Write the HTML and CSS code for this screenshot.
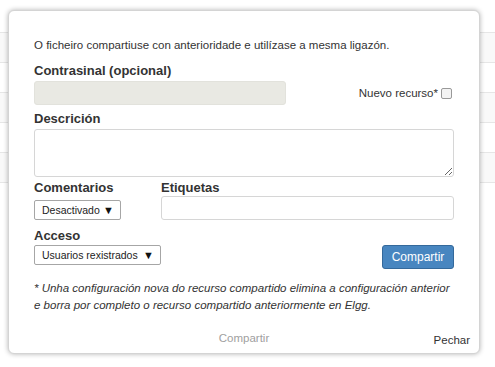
FILE: index.html
```html
<!DOCTYPE html>
<html lang="gl">
<head>
  <meta charset="UTF-8" />
  <meta name="viewport" content="width=device-width, initial-scale=1.0"/>
  <title>Compartir</title>
  <link rel="stylesheet" href="styles.css">
</head>
<body>

<div class="rows">
  <div class="row"></div>
  <div class="row"></div>
  <div class="row"></div>
  <div class="row"></div>
  <div class="row"></div>
</div>

<div class="modal">
  <p class="intro">O ficheiro compartiuse con anterioridade e utilízase a mesma ligazón.</p>

  <label class="lbl">Contrasinal (opcional)</label>
  <div class="line">
    <input type="text" class="pass" disabled />
    <span class="newres">Nuevo recurso* <span class="check"></span></span>
  </div>

  <label class="lbl desc-lbl">Descrición</label>
  <textarea class="desc"></textarea>

  <div class="cols">
    <div class="col-a">
      <label class="lbl">Comentarios</label>
      <div class="select sel-com">Desactivado <span class="arr">&#9660;</span></div>
    </div>
    <div class="col-b">
      <label class="lbl">Etiquetas</label>
      <input type="text" class="tags" />
    </div>
  </div>

  <label class="lbl acc-lbl">Acceso</label>
  <div class="line">
    <div class="select sel-acc">Usuarios rexistrados <span class="arr">&#9660;</span></div>
    <button class="btn">Compartir</button>
  </div>

  <p class="note">* Unha configuración nova do recurso compartido elimina a configuración anterior e borra por completo o recurso compartido anteriormente en Elgg.</p>

  <div class="foot">
    <span></span>
    <span class="foot-share">Compartir</span>
    <span class="foot-close">Pechar</span>
  </div>
</div>

</body>
</html>
```

FILE: styles.css
```css
body { margin: 0; font-family: "Liberation Sans", Arial, sans-serif; color: #333; background: #fff; }

.rows { margin-top: 32px; border-top: 1px solid #e6e6e6; }
.row { height: 29px; border-bottom: 1px solid #e6e6e6; }
.row:nth-child(odd) { background: #f9f9f9; }

.modal { position: absolute; left: 8px; top: 10px; width: 472px; height: 344px; box-sizing: border-box; padding: 26px 25px 0; background: #fff; border: 1px solid #d4d4d4; border-radius: 6px; box-shadow: 0 0 5px rgba(0,0,0,0.3); }

.intro { margin: 0 0 9px; font-size: 11.5px; line-height: 17px; }

.lbl { display: block; font-size: 13px; font-weight: bold; line-height: 16px; margin-bottom: 2px; }
.desc-lbl { margin-top: 6px; }
.acc-lbl { margin-top: 8px; margin-bottom: 1px; }

.line { display: flex; align-items: flex-start; }

.pass { width: 252px; height: 24px; box-sizing: border-box; margin: 0; background: #e9e9e3; border: 1px solid #e2e2dc; border-radius: 3px; }
.newres { margin-left: auto; margin-right: 2px; margin-top: 4px; font-size: 11.5px; line-height: 16px; display: flex; align-items: center; gap: 3px; }
.check { display: inline-block; width: 9px; height: 9px; border: 1px solid #999; border-radius: 2px; background: #f3f3f3; }

.desc { display: block; width: 100%; height: 48px; box-sizing: border-box; margin: 0; border: 1px solid #d6d6d6; border-radius: 3px; resize: vertical; font-family: inherit; }

.cols { display: flex; margin-top: 3px; }
.cols .lbl { margin-bottom: 0; }
.col-a { width: 127px; }
.col-b { flex: 1; }

.select { display: inline-flex; align-items: center; justify-content: space-between; box-sizing: border-box; height: 20px; padding: 0 6px 0 7px; border: 1px solid #a6a6a6; border-radius: 2px; font-size: 10.5px; color: #222; }
.sel-com { width: 87px; margin-top: 4px; }
.sel-acc { width: 127px; }
.arr { font-size: 11px; color: #111; }

.tags { display: block; width: 100%; height: 24px; box-sizing: border-box; margin: 0; border: 1px solid #d6d6d6; border-radius: 3px; }

.btn { margin-left: auto; width: 72px; height: 24px; padding: 0; background: #4886c0; border: 1px solid #34699b; border-radius: 3px; color: #fff; font-family: inherit; font-size: 12px; }

.note { margin: 11px 0 0; font-size: 11.5px; font-style: italic; line-height: 17px; }

.foot { display: grid; grid-template-columns: 1fr auto 1fr; margin: 16px -16px 0; font-size: 11.5px; line-height: 17px; }
.foot-share { color: #a0a0a0; }
.foot-close { justify-self: end; padding-top: 2px; }
```
